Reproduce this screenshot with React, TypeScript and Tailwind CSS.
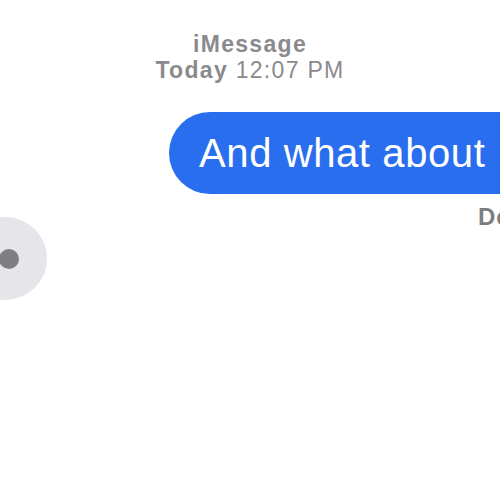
import React from "react";

export default function App() {
  return (
    <div
      className="w-[500px] h-[500px] overflow-hidden bg-white flex flex-col"
      style={{ fontFamily: '"Liberation Sans", Arial, sans-serif' }}
    >
      <div className="pt-[31px] flex flex-col items-center text-[23px] leading-[26px] tracking-[1.3px] text-[#8a8a8e]">
        <div className="font-bold">iMessage</div>
        <div>
          <span className="font-bold">Today</span> 12:07 PM
        </div>
      </div>
      <div className="mt-[29px] pl-[169px] flex">
        <div className="shrink-0 w-[420px] h-[82px] rounded-full bg-[#2a6ef0] pl-[30px] text-white text-[40px] leading-[82px] tracking-[0.6px] whitespace-nowrap">
          And what about
        </div>
      </div>
      <div className="mt-[11px] h-[12px] pl-[478px] whitespace-nowrap text-[24px] leading-[24px] font-bold tracking-[1px] text-[#7d7d80]">
        Delivered
      </div>
      <div className="flex">
        <div className="shrink-0 ml-[-36px] w-[83px] h-[83px] rounded-full bg-[#e5e5ea] flex items-center pl-[35px]">
          <div className="w-[20px] h-[20px] rounded-full bg-[#7f7f83]" />
        </div>
      </div>
    </div>
  );
}
